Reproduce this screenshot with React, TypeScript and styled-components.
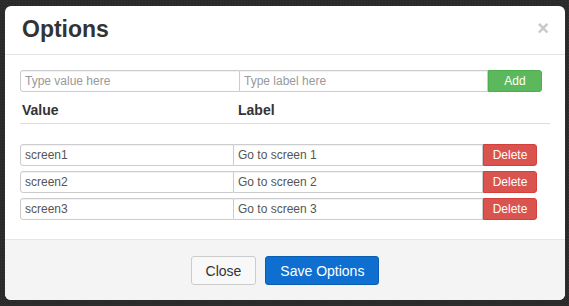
import React from 'react';
import styled, { createGlobalStyle } from 'styled-components';

const GlobalStyle = createGlobalStyle`
  html, body {
    margin: 0;
    padding: 0;
    height: 100%;
  }
  body {
    background-color: #2a2a2a;
    background-image: radial-gradient(#353535 0.8px, transparent 0.9px);
    background-size: 3px 3px;
    font-family: "Liberation Sans", Arial, sans-serif;
  }
`;

type TOption = {
  value: string;
  label: string;
}

const options: TOption[] = [
  { value: 'screen1', label: 'Go to screen 1' },
  { value: 'screen2', label: 'Go to screen 2' },
  { value: 'screen3', label: 'Go to screen 3' },
];

export default function App() {
  return (
    <>
      <GlobalStyle />
      <SModal>
        <SHeader>
          <STitle>Options</STitle>
          <SCloseX>×</SCloseX>
        </SHeader>

        <SBody>
          <SAddRow>
            <SInput $w={220} $first placeholder='Type value here' />
            <SInput $w={248} placeholder='Type label here' />
            <SButton $kind='success' $w={54}>Add</SButton>
          </SAddRow>

          <SColumns>
            <span className='col_value'>Value</span>
            <span>Label</span>
          </SColumns>

          <SList>
            {options.map((o) => (
              <SOptionRow key={o.value}>
                <SInput $w={214} $first defaultValue={o.value} />
                <SInput $w={249} defaultValue={o.label} />
                <SButton $kind='danger' $w={54}>Delete</SButton>
              </SOptionRow>
            ))}
          </SList>
        </SBody>

        <SFooter>
          <SFooterButton $primary={false}>Close</SFooterButton>
          <SFooterButton $primary>Save Options</SFooterButton>
        </SFooter>
      </SModal>
    </>
  );
}

const SModal = styled.div`
  box-sizing: border-box;
  width: 560px;
  height: 294px;
  margin: 6px 0 0 5px;
  background: #fff;
  border-radius: 6px;
  overflow: hidden;
  display: flex;
  flex-direction: column;
`;

const SHeader = styled.div`
  box-sizing: border-box;
  height: 49px;
  padding: 0 16px 0 17px;
  display: flex;
  align-items: center;
  justify-content: space-between;
  border-bottom: 1px solid #e5e5e5;
`;

const STitle = styled.h3`
  margin: 0;
  padding-bottom: 2px;
  font-size: 23px;
  font-weight: bold;
  color: #333;
`;

const SCloseX = styled.span`
  font-size: 20px;
  font-weight: bold;
  color: #c8c8c8;
  line-height: 1;
  margin-bottom: 4px;
  cursor: pointer;
`;

const SBody = styled.div`
  box-sizing: border-box;
  height: 185px;
  padding: 15px 15px 0 15px;
  border-bottom: 1px solid #e5e5e5;
`;

const SAddRow = styled.div`
  display: flex;
  height: 22px;
`;

const SInput = styled.input<{ $w: number; $first?: boolean }>`
  box-sizing: border-box;
  width: ${(p) => p.$w}px;
  height: 22px;
  margin: 0;
  padding: 0 4px;
  border: 1px solid #ccc;
  border-left-width: ${(p) => (p.$first ? 1 : 0)}px;
  border-radius: ${(p) => (p.$first ? '3px 0 0 3px' : '0')};
  box-shadow: inset 0 1px 1px rgba(0, 0, 0, 0.06);
  font-family: "Liberation Sans", Arial, sans-serif;
  font-size: 12px;
  color: #555;
  outline: none;
  &::placeholder {
    color: #999;
  }
`;

const SButton = styled.button<{ $kind: 'success' | 'danger'; $w: number }>`
  box-sizing: border-box;
  width: ${(p) => p.$w}px;
  height: 22px;
  margin: 0;
  padding: 0;
  border: 1px solid ${(p) => (p.$kind === 'success' ? '#4cae4c' : '#d43f3a')};
  border-radius: 0 3px 3px 0;
  background: ${(p) => (p.$kind === 'success' ? '#5cb85c' : '#d9534f')};
  color: #fff;
  font-family: "Liberation Sans", Arial, sans-serif;
  font-size: 12px;
  cursor: pointer;
`;

const SColumns = styled.div`
  box-sizing: border-box;
  width: 530px;
  margin-top: 8px;
  padding: 0 0 3px 2px;
  display: flex;
  line-height: 20px;
  border-bottom: 1px solid #ddd;
  font-size: 14px;
  font-weight: bold;
  color: #333;
  .col_value {
    width: 216px;
  }
`;

const SList = styled.div`
  margin-top: 20px;
  display: flex;
  flex-direction: column;
  gap: 5px;
`;

const SOptionRow = styled.div`
  display: flex;
  height: 22px;
`;

const SFooter = styled.div`
  flex: 1;
  background: #f4f4f4;
  display: flex;
  align-items: center;
  justify-content: center;
  gap: 9px;
  padding-top: 1px;
`;

const SFooterButton = styled.button<{ $primary: boolean }>`
  box-sizing: border-box;
  height: 29px;
  padding: 0 ${(p) => (p.$primary ? 14 : 14)}px;
  border: 1px solid ${(p) => (p.$primary ? '#0b5fb3' : '#ccc')};
  border-radius: 3px;
  background: ${(p) => (p.$primary ? '#0f6fd0' : '#f8f8f8')};
  color: ${(p) => (p.$primary ? '#fff' : '#333')};
  font-family: "Liberation Sans", Arial, sans-serif;
  font-size: 14px;
  cursor: pointer;
`;
